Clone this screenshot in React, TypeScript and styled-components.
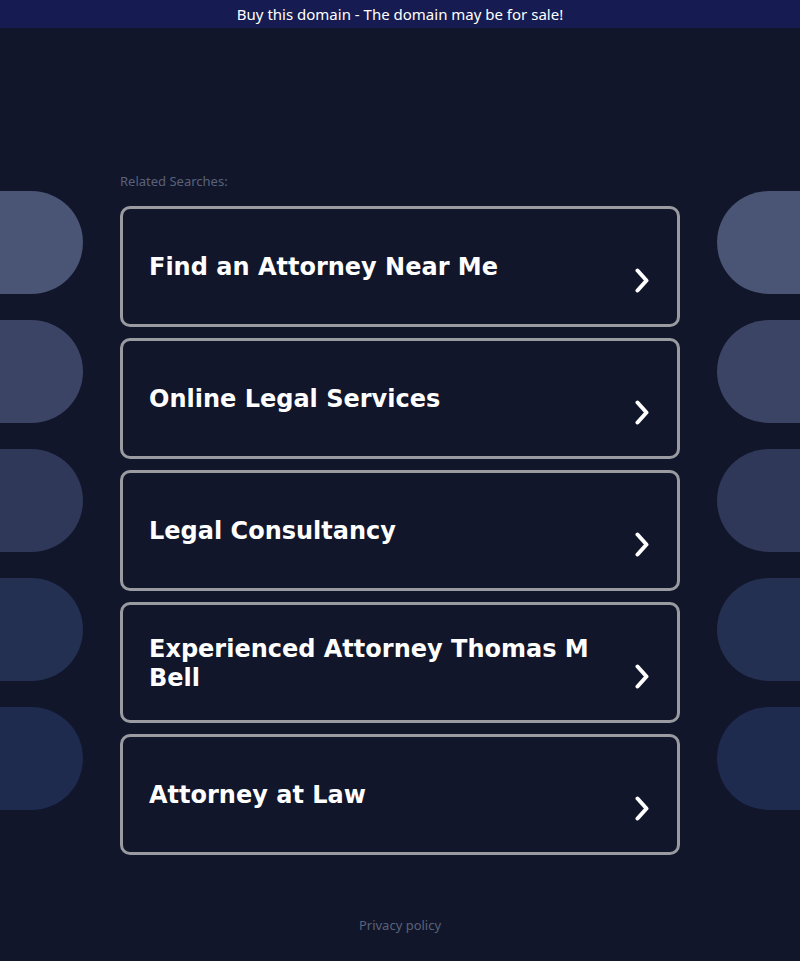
import React from "react";
import styled, { createGlobalStyle } from "styled-components";

const GlobalStyle = createGlobalStyle`
  html, body {
    margin: 0;
    padding: 0;
    background: #11162b;
  }
  body {
    font-family: "DejaVu Sans", "Noto Sans", sans-serif;
  }
`;

const Page = styled.div`
  width: 800px;
  min-height: 961px;
  background: #11162b;
  display: flex;
  flex-direction: column;
`;

const TopBar = styled.a`
  display: block;
  height: 28px;
  line-height: 28px;
  background: #161c51;
  color: #ffffff;
  font-family: "Noto Sans", "Open Sans", sans-serif;
  font-size: 15px;
  text-align: center;
  text-decoration: none;
`;

const Main = styled.div`
  display: grid;
  grid-template-columns: 83px 560px 83px;
  justify-content: space-between;
`;

const SideColumn = styled.div`
  display: flex;
  flex-direction: column;
  gap: 26px;
  padding-top: 163px;
`;

const Pill = styled.div<{ $side: "left" | "right"; $color: string }>`
  height: 103px;
  background: ${(p) => p.$color};
  border-radius: ${(p) => (p.$side === "left" ? "0 52px 52px 0" : "52px 0 0 52px")};
`;

const Center = styled.div`
  padding-top: 146px;
  display: flex;
  flex-direction: column;
`;

const Label = styled.div`
  font-family: "Noto Sans", "Open Sans", sans-serif;
  font-size: 13px;
  line-height: 15px;
  color: #5a627a;
  margin-bottom: 17px;
`;

const CardList = styled.div`
  display: flex;
  flex-direction: column;
  gap: 11px;
`;

const Card = styled.a`
  box-sizing: border-box;
  height: 121px;
  border: 3px solid #9a9ba0;
  border-radius: 10px;
  background: #11162b;
  padding: 2px 28px 0 26px;
  display: flex;
  align-items: center;
  justify-content: space-between;
  text-decoration: none;
  color: #ffffff;
`;

const CardText = styled.span`
  font-family: "DejaVu Sans", "Verdana", sans-serif;
  font-weight: bold;
  font-size: 24px;
  line-height: 29px;
  color: #ffffff;
  max-width: 460px;
`;

const Chevron = styled.svg`
  flex: none;
  width: 14px;
  height: 25px;
  margin-top: 26px;
`;

const Footer = styled.div`
  margin-top: 63px;
  text-align: center;
  font-family: "Noto Sans", "Open Sans", sans-serif;
  font-size: 13px;
  line-height: 15px;
  color: #5a627a;
`;

const pillColors = ["#4a5474", "#3b4464", "#2f3858", "#243052", "#1e2a4e"];

const searches = [
  "Find an Attorney Near Me",
  "Online Legal Services",
  "Legal Consultancy",
  "Experienced Attorney Thomas M Bell",
  "Attorney at Law",
];

const ChevronIcon = () => (
  <Chevron viewBox="0 0 14 25" fill="none">
    <path
      d="M2.5 2.5 L11.5 12.5 L2.5 22.5"
      stroke="#ffffff"
      strokeWidth="4"
      strokeLinecap="round"
      strokeLinejoin="round"
    />
  </Chevron>
);

export default function App() {
  return (
    <>
      <GlobalStyle />
      <Page>
        <TopBar href="#">Buy this domain - The domain may be for sale!</TopBar>
        <Main>
          <SideColumn>
            {pillColors.map((c) => (
              <Pill key={c} $side="left" $color={c} />
            ))}
          </SideColumn>
          <Center>
            <Label>Related Searches:</Label>
            <CardList>
              {searches.map((s) => (
                <Card key={s} href="#">
                  <CardText>{s}</CardText>
                  <ChevronIcon />
                </Card>
              ))}
            </CardList>
            <Footer>Privacy policy</Footer>
          </Center>
          <SideColumn>
            {pillColors.map((c) => (
              <Pill key={c} $side="right" $color={c} />
            ))}
          </SideColumn>
        </Main>
      </Page>
    </>
  );
}
